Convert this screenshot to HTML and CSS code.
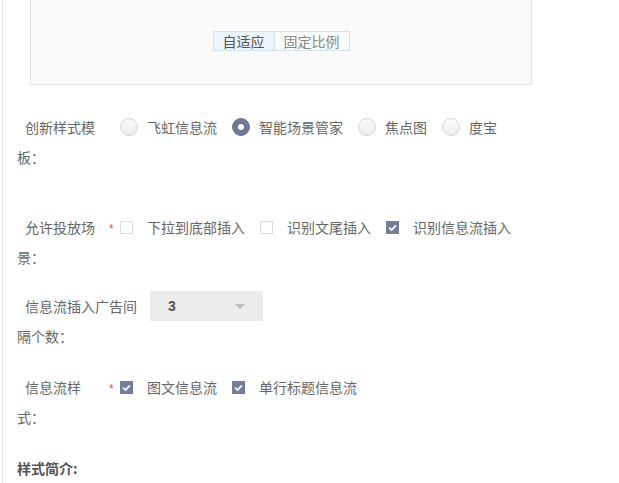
FILE: index.html
```html
<!DOCTYPE html>
<html lang="zh">
<head>
<meta charset="utf-8">
<link rel="stylesheet" href="styles.css">
</head>
<body>
<div class="page">
  <div class="preview">
    <div class="btn-group">
      <span class="btn btn-active">自适应</span><span class="btn">固定比例</span>
    </div>
  </div>

  <div class="row row-1">
    <div class="label label-wide">创新样式模板：</div>
    <div class="controls">
      <span class="opt"><span class="radio"></span>飞虹信息流</span>
      <span class="opt"><span class="radio radio-on"></span>智能场景管家</span>
      <span class="opt"><span class="radio"></span>焦点图</span>
      <span class="opt"><span class="radio"></span>度宝</span>
    </div>
  </div>

  <div class="row row-2">
    <div class="label">允许投放场景：</div>
    <span class="star">*</span>
    <div class="controls">
      <span class="opt"><span class="check"></span>下拉到底部插入</span>
      <span class="opt"><span class="check"></span>识别文尾插入</span>
      <span class="opt"><span class="check check-on"><svg viewBox="0 0 13 13" width="13" height="13"><path d="M3.2 6.6 L5.6 9 L9.9 4.4" fill="none" stroke="#fff" stroke-width="1.8"/></svg></span>识别信息流插入</span>
    </div>
  </div>

  <div class="row row-3">
    <div class="label label-long">信息流插入广告间隔个数：</div>
    <div class="select"><span class="select-val">3</span><span class="caret"></span></div>
  </div>

  <div class="row row-4">
    <div class="label">信息流样式：</div>
    <span class="star">*</span>
    <div class="controls">
      <span class="opt"><span class="check check-on"><svg viewBox="0 0 13 13" width="13" height="13"><path d="M3.2 6.6 L5.6 9 L9.9 4.4" fill="none" stroke="#fff" stroke-width="1.8"/></svg></span>图文信息流</span>
      <span class="opt"><span class="check check-on"><svg viewBox="0 0 13 13" width="13" height="13"><path d="M3.2 6.6 L5.6 9 L9.9 4.4" fill="none" stroke="#fff" stroke-width="1.8"/></svg></span>单行标题信息流</span>
    </div>
  </div>

  <div class="section-title">样式简介:</div>
</div>
</body>
</html>
```

FILE: styles.css
```css
html, body {
  margin: 0;
  padding: 0;
  background: #fff;
}
body {
  font-family: "Noto Sans CJK SC", "Microsoft YaHei", sans-serif;
  font-size: 14px;
  color: #666;
}
.page {
  margin-left: 2px;
  border-left: 1px solid #e4e4e4;
  padding-left: 14px;
  min-height: 483px;
  box-sizing: border-box;
  overflow: hidden;
}
.preview {
  margin-left: 13px;
  width: 502px;
  height: 85px;
  box-sizing: border-box;
  background: #f9fafb;
  border: 1px solid #e2e2e2;
  border-top: none;
  display: flex;
  justify-content: center;
  align-items: flex-start;
}
.btn-group {
  margin-top: 31px;
  display: flex;
}
.btn {
  height: 20px;
  line-height: 18px;
  box-sizing: border-box;
  border: 1px solid #d3e3ec;
  padding: 0 9px;
  background: #f9fbfc;
  color: #888;
}
.btn + .btn {
  border-left: none;
}
.btn-active {
  background: #eaf4fa;
  color: #555;
}
.row {
  display: flex;
  align-items: flex-start;
  line-height: 30px;
}
.row-1 { margin-top: 27px; }
.row-2 { margin-top: 40px; }
.row-3 { margin-top: 19px; }
.row-4 { margin-top: 21px; }
.label {
  width: 92px;
  padding-right: 7px;
  box-sizing: border-box;
  text-indent: 8px;
  line-break: strict;
}
.label-wide {
  width: 103px;
  padding-right: 18px;
}
.label-long {
  width: 133px;
  padding-right: 7px;
}
.star {
  width: 11px;
  color: #f04646;
  font-size: 12px;
  line-height: 12px;
  padding-top: 11px;
  font-family: "Liberation Sans", sans-serif;
}
.controls {
  display: flex;
  gap: 15px;
  height: 30px;
  align-items: center;
}
.opt {
  display: flex;
  align-items: center;
  white-space: nowrap;
}
.radio {
  width: 18px;
  height: 18px;
  box-sizing: border-box;
  border-radius: 50%;
  border: 1px solid #d6d6d6;
  background: linear-gradient(#fbfbfb, #eeeeee);
  margin-right: 9px;
  position: relative;
}
.radio-on {
  border-color: #6d7995;
  background: #6d7995;
}
.radio-on::after {
  content: "";
  position: absolute;
  left: 5px;
  top: 5px;
  width: 6px;
  height: 6px;
  border-radius: 50%;
  background: #fff;
}
.check {
  width: 13px;
  height: 13px;
  box-sizing: border-box;
  border: 1px solid #dcdcdc;
  background: #fff;
  margin-right: 14px;
  display: flex;
}
.check-on {
  border: none;
  background: #727e9a;
}
.select {
  width: 113px;
  height: 30px;
  background: #ebebeb;
  display: flex;
  align-items: center;
  justify-content: space-between;
  padding: 0 18px 0 18px;
  box-sizing: border-box;
}
.select-val {
  font-family: "Liberation Sans", Arial, sans-serif;
  font-weight: bold;
  color: #555;
  font-size: 14px;
}
.caret {
  width: 0;
  height: 0;
  border-left: 5px solid transparent;
  border-right: 5px solid transparent;
  border-top: 5px solid #bcbcbc;
}
.section-title {
  margin-top: 21px;
  line-height: 30px;
  font-weight: bold;
  color: #555;
}
```
